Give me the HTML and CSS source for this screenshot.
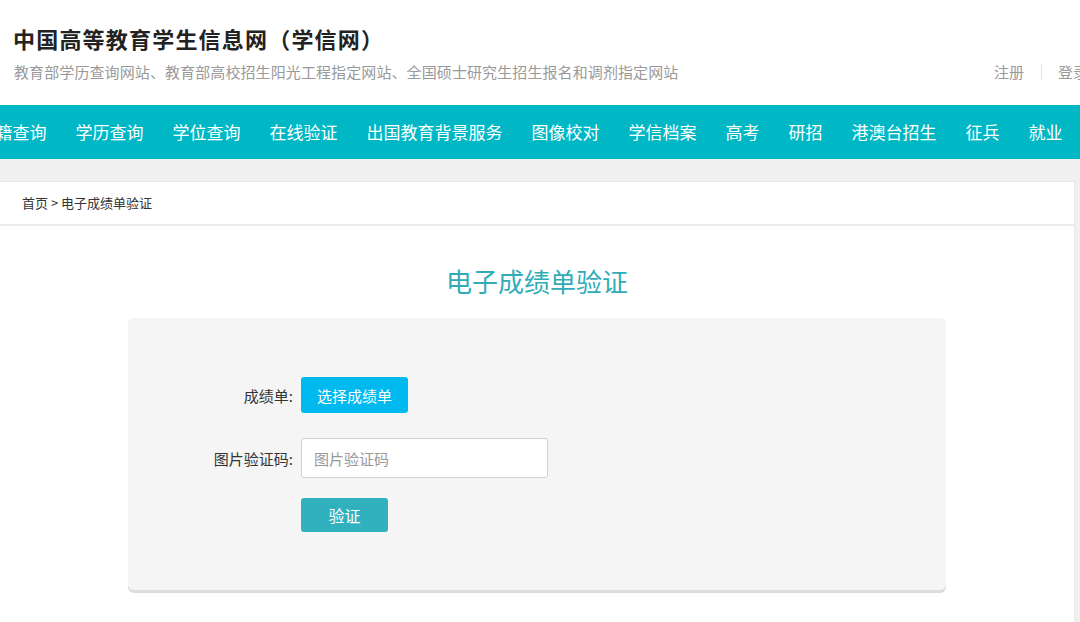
FILE: index.html
```html
<!DOCTYPE html>
<html lang="zh-CN">
<head>
<meta charset="utf-8">
<title>电子成绩单验证</title>
<link rel="stylesheet" href="styles.css">
</head>
<body>
<header class="header">
  <div class="brand">
    <h1 class="site-title">中国高等教育学生信息网（学信网）</h1>
    <p class="site-sub">教育部学历查询网站、教育部高校招生阳光工程指定网站、全国硕士研究生招生报名和调剂指定网站</p>
  </div>
  <div class="account">
    <a class="acc-link">注册</a>
    <span class="acc-sep"></span>
    <a class="acc-link">登录</a>
  </div>
</header>
<nav class="nav">
  <ul class="nav-list">
    <li>学籍查询</li>
    <li>学历查询</li>
    <li>学位查询</li>
    <li>在线验证</li>
    <li>出国教育背景服务</li>
    <li>图像校对</li>
    <li>学信档案</li>
    <li>高考</li>
    <li>研招</li>
    <li>港澳台招生</li>
    <li>征兵</li>
    <li>就业</li>
  </ul>
</nav>
<main class="main">
  <div class="wrap">
    <div class="crumb">首页 &gt; 电子成绩单验证</div>
    <h2 class="page-title">电子成绩单验证</h2>
    <div class="form-box">
      <div class="f-row row-file">
        <label class="f-label">成绩单:</label>
        <button class="btn-choose">选择成绩单</button>
      </div>
      <div class="f-row row-code">
        <label class="f-label">图片验证码:</label>
        <input class="f-input" type="text" placeholder="图片验证码">
      </div>
      <div class="f-row">
        <span class="f-label"></span>
        <button class="btn-verify">验证</button>
      </div>
    </div>
  </div>
</main>
</body>
</html>
```
FILE: styles.css
```css
html, body {
  margin: 0;
  padding: 0;
  overflow: hidden;
  background: #fff;
}
body {
  font-family: "Noto Sans CJK SC", "Noto Sans", "Liberation Sans", sans-serif;
  color: #333;
  width: 1080px;
  height: 622px;
}
.header {
  height: 105px;
  box-sizing: border-box;
  padding: 22px 0 0 13px;
  display: flex;
  align-items: flex-start;
  justify-content: space-between;
}
.site-title {
  margin: 0;
  font-size: 22px;
  line-height: 32px;
  font-weight: 700;
  color: #222;
  letter-spacing: 1.2px;
}
.site-sub {
  margin: 8px 0 0 1px;
  font-size: 15px;
  line-height: 20px;
  color: #999;
  letter-spacing: 0.1px;
}
.account {
  display: flex;
  align-items: center;
  margin-top: 40px;
  margin-right: -8px;
  font-size: 15px;
  line-height: 20px;
  color: #999;
}
.acc-sep {
  width: 1px;
  height: 16px;
  background: #e3e3e3;
  margin: 0 16px 0 17px;
}
.nav {
  height: 54px;
  background: #00b8c5;
  overflow: hidden;
}
.nav-list {
  list-style: none;
  margin: 0 0 0 -36px;
  padding: 0;
  display: flex;
  white-space: nowrap;
}
.nav-list li {
  padding: 0 14.5px;
  font-size: 17px;
  line-height: 54px;
  color: #fff;
}
.main {
  background: #f0f0f0;
  padding-top: 22px;
  height: 441px;
}
.wrap {
  background: #fff;
  margin: 0 5px 0 -1px;
  border: 1px solid #e8e8e8;
  border-bottom: 0;
  height: 100%;
}
.crumb {
  height: 42px;
  line-height: 42px;
  font-size: 13px;
  color: #333;
  padding-left: 22px;
  border-bottom: 2px solid #ececec;
}
.page-title {
  margin: 37px 0 19px;
  text-align: center;
  font-size: 26px;
  line-height: 36px;
  font-weight: 400;
  color: #31acb7;
}
.form-box {
  width: 818px;
  height: 272px;
  margin: 0 auto;
  box-sizing: border-box;
  background: #f5f5f5;
  border-radius: 6px;
  box-shadow: 0 3px 0 #dcdcdc;
  padding-top: 59px;
}
.f-row {
  display: flex;
  align-items: center;
  gap: 8px;
}
.row-file {
  margin-bottom: 25px;
}
.row-code {
  margin-bottom: 20px;
}
.f-label {
  width: 165px;
  text-align: right;
  font-size: 15px;
  color: #333;
}
.btn-choose {
  height: 36px;
  padding: 0 16px;
  border: 0;
  border-radius: 3px;
  background: #00b9ef;
  color: #fff;
  font-family: inherit;
  font-size: 15px;
}
.f-input {
  width: 247px;
  height: 40px;
  box-sizing: border-box;
  border: 1px solid #d0d0d0;
  border-radius: 3px;
  background: #fff;
  padding: 0 12px;
  font-family: inherit;
  font-size: 15px;
  color: #333;
}
.f-input::placeholder {
  color: #999;
}
.btn-verify {
  width: 87px;
  height: 34px;
  border: 0;
  border-radius: 3px;
  background: #30b1bd;
  color: #fff;
  font-family: inherit;
  font-size: 16px;
}
```
